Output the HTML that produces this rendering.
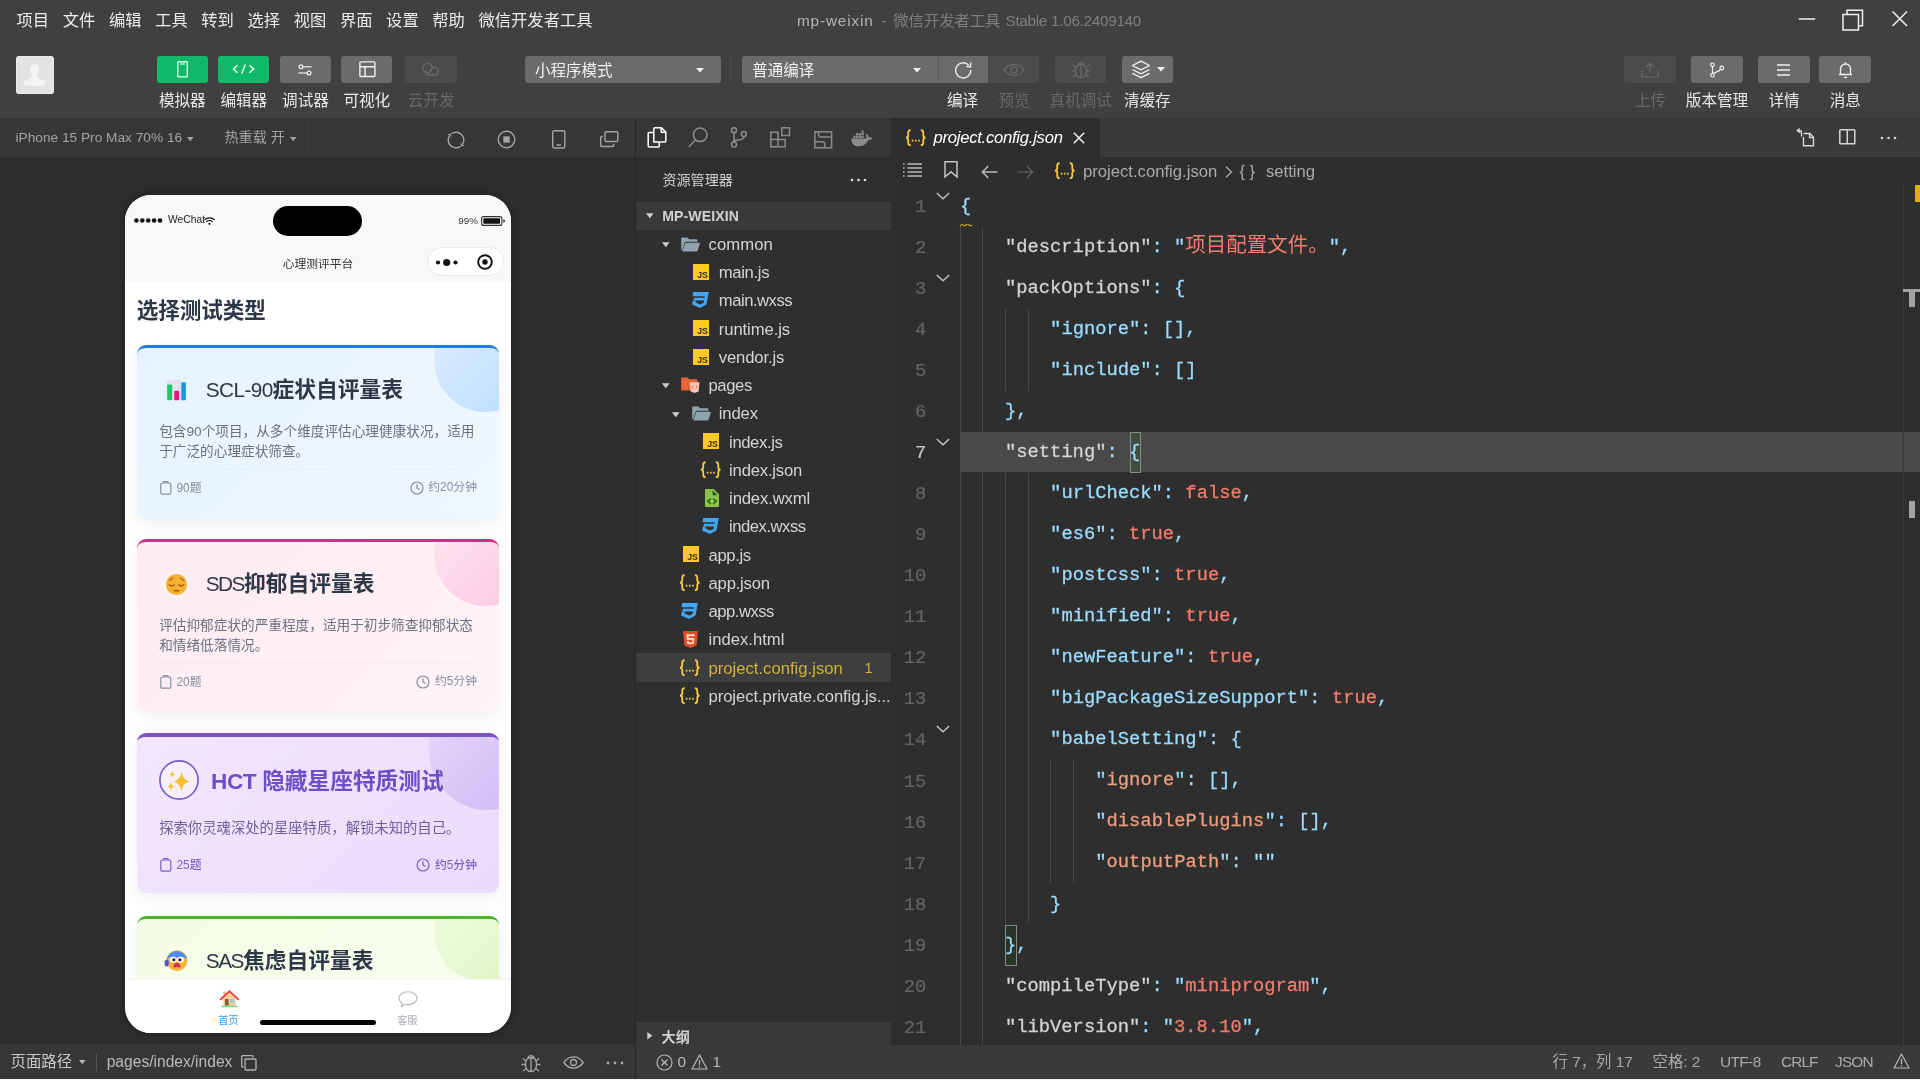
<!DOCTYPE html>
<html lang="zh-CN">
<head>
<meta charset="utf-8">
<title>mp-weixin - 微信开发者工具 Stable 1.06.2409140</title>
<style>
*{box-sizing:border-box;margin:0;padding:0}
html,body{width:1920px;height:1080px;overflow:hidden;background:#404040}
body{position:relative;will-change:transform;font-family:"Liberation Sans","Noto Sans CJK SC",sans-serif;color:#e6e6e6;-webkit-font-smoothing:antialiased}
.abs{position:absolute}
svg{display:block;overflow:visible}
.t{position:absolute;white-space:nowrap;line-height:1}
/* ---------- menubar ---------- */
#menubar{position:absolute;left:0;top:0;width:1920px;height:40px;background:#404040}
#menubar .m{position:absolute;top:12px;font-size:16.3px;line-height:17px;color:#ececec;white-space:nowrap}
#title{position:absolute;top:12px;left:797px;font-size:15.3px;line-height:17px;white-space:nowrap;color:#7e7e7e}
#title b{font-weight:400;color:#b4b4b4}
/* ---------- toolbar ---------- */
#toolbar{position:absolute;left:0;top:40px;width:1920px;height:78px;background:#404040}
.btn{position:absolute;top:16px;height:27px;border-radius:3px;background:#6b6b6b}
.btn.g{background:#10b96a}
.btn.d{background:#4b4b4b}
.lbl{position:absolute;top:52px;font-size:15.6px;line-height:17px;color:#e9e9e9;white-space:nowrap;transform:translateX(-50%)}
.lbl.d{color:#686868}
/* ---------- sim bar ---------- */
#simbar{position:absolute;left:0;top:118px;width:635px;height:39px;background:#363636}
#sim{position:absolute;left:0;top:157px;width:635px;height:888px;background:#2e2e2e;overflow:hidden}
#simfoot{position:absolute;left:0;top:1043.8px;width:635px;height:35.2px;background:#363636}
#vsplit{position:absolute;left:635px;top:118px;width:1px;height:961px;background:#262626}
/* ---------- explorer ---------- */
#actbar{position:absolute;left:636px;top:118px;width:255px;height:39px;background:#363636}
#explorer{position:absolute;left:636px;top:157px;width:255px;height:888px;background:#2f2f2f;overflow:hidden}
/* ---------- editor ---------- */
#tabs{position:absolute;left:891px;top:118px;width:1029px;height:39px;background:#3a3a3a}
#editor{position:absolute;left:891px;top:157px;width:1029px;height:888px;background:#2e2e2e;overflow:hidden}
#status{position:absolute;left:636px;top:1044.6px;width:1284px;height:34.4px;background:#3a3a3a}
#bottomline{position:absolute;left:0;top:1078.6px;width:1920px;height:1.4px;background:#f4f4f4}
.ex{font-size:16.67px;line-height:20px}
.bc{font-size:16.67px;line-height:20px;color:#a9a9a9}
.cl{position:absolute;white-space:pre;font-family:"Liberation Mono","Noto Sans CJK SC",monospace;font-size:18.8px;line-height:41.04px;height:41.04px;color:#9cdcfe;-webkit-text-stroke:.28px}
.cl .k1{color:#d4d4d4}
.cl .k2{color:#9cdcfe}
.cl .k3{color:#ee9d7d}
.cl .s{color:#f47c6c}
.cl .cj{font-size:20.5px;line-height:20px;-webkit-text-stroke:0}
.ln{position:absolute;left:0;width:35.2px;text-align:right;font-family:"Liberation Mono",monospace;font-size:18.8px;line-height:41.04px;color:#646464;margin-top:1.2px;-webkit-text-stroke:.2px}
.ln.cur{color:#c8c8c8}
.ig{position:absolute;width:1px;background:#464646}
.bm{border:1px solid #8a8a8a;background:rgba(0,100,0,.12)}
.sb{top:9.9px;font-size:15.4px;color:#a9a9a9}
#phone{position:absolute;left:125px;top:38px;width:386px;height:837.7px;border-radius:26px;background:#fff;overflow:hidden;box-shadow:0 0 12px rgba(0,0,0,.36)}
.card{position:absolute;left:12px;width:361.8px;border-radius:9px;overflow:hidden;box-shadow:0 6px 18px rgba(40,50,80,.07)}
.card .blob{position:absolute;border-radius:50%}
.c1{background:linear-gradient(135deg,#e6f3fe,#eff8ff)}
.c2{background:linear-gradient(135deg,#fdebf2,#fff4f7)}
.c3{background:linear-gradient(135deg,#f1e7fd,#ebdcfb)}
.c4{background:linear-gradient(135deg,#f4fce6,#f9ffef)}
.c1 .blob{right:-38px;top:-39.500px;width:103px;height:103px;background:linear-gradient(135deg,rgba(190,222,252,.25),rgba(176,214,252,.85))}
.c2 .blob{right:-38px;top:-39.500px;width:103px;height:103px;background:linear-gradient(135deg,rgba(252,214,232,.25),rgba(250,190,218,.85))}
.c3 .blob{right:-46px;top:-47px;width:116px;height:120px;background:linear-gradient(135deg,rgba(220,200,248,.25),rgba(200,176,240,.85))}
.c4 .blob{right:-38px;top:-39.500px;width:103px;height:103px;background:linear-gradient(135deg,rgba(225,246,200,.25),rgba(210,240,180,.7))}
.ttl{font-weight:700}
.ttl i{font-style:normal;font-weight:400;letter-spacing:-.9px;font-size:20.8px}
.ttl b{letter-spacing:-.45px}
.desc{line-height:20px;white-space:nowrap}
</style>
</head>
<body>
<div id="menubar">
<span class="m" style="left:16.5px">项目</span>
<span class="m" style="left:62.7px">文件</span>
<span class="m" style="left:108.9px">编辑</span>
<span class="m" style="left:155.1px">工具</span>
<span class="m" style="left:201.3px">转到</span>
<span class="m" style="left:247.5px">选择</span>
<span class="m" style="left:293.7px">视图</span>
<span class="m" style="left:339.9px">界面</span>
<span class="m" style="left:386.1px">设置</span>
<span class="m" style="left:432.3px">帮助</span>
<span class="m" style="left:478.5px">微信开发者工具</span>
<div id="title"><b style="letter-spacing:.85px">mp-weixin</b><span style="position:absolute;left:84.5px;top:0">-</span><span style="position:absolute;left:96.3px;top:0">微信开发者工具</span><span style="position:absolute;left:208.5px;top:0;letter-spacing:-.3px">Stable 1.06.2409140</span></div>
<svg class="abs" style="left:1798px;top:8px" width="112" height="24" viewBox="0 0 112 24"><g fill="none" stroke="#f0f0f0" stroke-width="1.5"><path d="M.8 11h16.4"/><path d="M45 6.500h15.500v15.500h-15.500zM49 6.500V2.200h15.500v15.500h-4"/><path d="M94.5 3.500l14.5 14.500M109 3.500L94.5 18"/></g></svg>
</div>
<div id="toolbar">
<div class="abs" style="left:16px;top:15.700px;width:38.200px;height:38.500px;border-radius:3.500px;background:#e3e3e3;overflow:hidden;box-shadow:inset 0 0 0 1px #ebebeb">
<svg width="38" height="38" viewBox="0 0 38 38"><ellipse cx="18.400" cy="13.700" rx="4.500" ry="5.100" fill="#f3f3f3"/><path d="M16 17h4.800c0 3 1.200 4.800 3.200 5.700l4 1.700c.8.400 1 1 1 1.800v3.500H8v-3.500c0-.8.200-1.400 1-1.800l4-1.700c2-.9 3-2.700 3-5.700z" fill="#f3f3f3"/></svg>
</div>
<!-- left group -->
<div class="btn g" style="left:157px;width:51px"><svg class="abs" style="left:20px;top:5.3px" width="11" height="17" viewBox="0 0 11 17"><rect x=".7" y=".7" width="9.6" height="15.2" rx=".8" fill="none" stroke="#d9ffe9" stroke-width="1.4"/><path d="M3 3h5" stroke="#d9ffe9" stroke-width="1.2"/></svg></div>
<div class="btn g" style="left:218.3px;width:51px"><svg class="abs" style="left:14px;top:7px" width="23" height="12" viewBox="0 0 23 12"><path d="M5.5 2.2L1.5 6l4 3.8M17.5 2.2l4 3.8-4 3.8M13.3 1.5L9.7 10.5" fill="none" stroke="#e6fff1" stroke-width="1.5"/></svg></div>
<div class="btn" style="left:280px;width:51px"><svg class="abs" style="left:18px;top:7.5px" width="14" height="12" viewBox="0 0 14 12"><g fill="none" stroke="#f0f0f0" stroke-width="1.2"><circle cx="3" cy="2.8" r="1.9"/><path d="M5 2.8h8.5"/><circle cx="11" cy="9" r="1.9"/><path d="M.5 9h8.5"/></g></svg></div>
<div class="btn" style="left:341.3px;width:51px"><svg class="abs" style="left:17.5px;top:5px" width="17" height="17" viewBox="0 0 17 17"><g fill="none" stroke="#f0f0f0" stroke-width="1.4"><rect x=".9" y=".9" width="15" height="14.6" rx=".8"/><path d="M.9 5.7h15M6 5.7v9.8"/></g></svg></div>
<div class="btn d" style="left:405.3px;width:51.7px"><svg class="abs" style="left:16px;top:6px" width="20" height="15" viewBox="0 0 20 15"><g fill="none" stroke="#6a6a6a" stroke-width="1.3"><circle cx="6.5" cy="6" r="4.6"/><path d="M9.5 9.5a4 4 0 1 1 3.5 3.5h-5a3.5 3.5 0 0 1-3-5"/></g></svg></div>
<span class="lbl" style="left:182.3px">模拟器</span>
<span class="lbl" style="left:243.8px">编辑器</span>
<span class="lbl" style="left:305.5px">调试器</span>
<span class="lbl" style="left:366.8px">可视化</span>
<span class="lbl d" style="left:431.2px">云开发</span>
<!-- selects -->
<div class="btn" style="left:525px;width:195.5px"><span class="t" style="left:10px;top:7.3px;font-size:15.5px;color:#f2f2f2">小程序模式</span><svg class="abs" style="left:171px;top:11.5px" width="8" height="5" viewBox="0 0 8 5"><path d="M0 0h8L4 4.6z" fill="#f2f2f2"/></svg></div>
<div class="abs" style="left:730px;top:16px;width:1px;height:27px;background:#4e4e4e"></div>
<div class="btn" style="left:741.7px;width:196px;border-radius:3px 0 0 3px"><span class="t" style="left:10.5px;top:7.3px;font-size:15.5px;color:#f2f2f2">普通编译</span><svg class="abs" style="left:171.3px;top:11.5px" width="8" height="5" viewBox="0 0 8 5"><path d="M0 0h8L4 4.6z" fill="#f2f2f2"/></svg></div>
<div class="btn" style="left:937.7px;width:50.5px;border-radius:0;border-left:1px solid #5c5c5c"><svg class="abs" style="left:14px;top:3.5px" width="21" height="20" viewBox="0 0 21 20"><path d="M15.8 5.2A7.6 7.6 0 1 0 17.8 10" fill="none" stroke="#f2f2f2" stroke-width="1.3"/><path d="M13.2 6.3l4.3.6.3-4.3" fill="none" stroke="#f2f2f2" stroke-width="1.3"/></svg></div>
<div class="btn d" style="left:988.2px;width:50.6px;border-radius:0 3px 3px 0"><svg class="abs" style="left:15px;top:7.5px" width="22" height="12" viewBox="0 0 22 12"><g fill="none" stroke="#6c6c6c" stroke-width="1.2"><path d="M.8 6C4 1.7 7.5.7 11 .7s7 1 10.2 5.3C18 10.3 14.5 11.3 11 11.3S4 10.3.8 6z"/><circle cx="11" cy="6" r="3"/></g></svg></div>
<div class="btn d" style="left:1055px;width:50.8px"><svg class="abs" style="left:14.5px;top:3.5px" width="22" height="20" viewBox="0 0 22 20"><g fill="none" stroke="#6c6c6c" stroke-width="1.2"><path d="M11 4.5c3.6 0 5.5 2.6 5.5 6.5s-2.2 6.5-5.5 6.5S5.5 14.9 5.5 11 7.4 4.5 11 4.5zM11 4.5v13M7.8 5.3a3.3 3.3 0 0 1 6.4 0M5.5 11H1.5M16.5 11h4M6 7.5L2.8 5M16 7.5L19.2 5M6.2 14.5L3 17M15.8 14.5L19 17"/></g></svg></div>
<div class="btn" style="left:1121.7px;width:51.3px"><svg class="abs" style="left:9.5px;top:4px" width="20" height="19" viewBox="0 0 20 19"><g fill="none" stroke="#f2f2f2" stroke-width="1.3" stroke-linejoin="round"><path d="M10 1.2l8.5 4.3L10 9.8 1.5 5.5z"/><path d="M1.5 9.5L10 13.8l8.5-4.3M1.5 13.3l8.5 4.3 8.5-4.3"/></g></svg><svg class="abs" style="left:35.5px;top:11px" width="8" height="5" viewBox="0 0 8 5"><path d="M0 0h8L4 4.6z" fill="#f2f2f2"/></svg></div>
<span class="lbl" style="left:962.6px">编译</span>
<span class="lbl d" style="left:1014.2px">预览</span>
<span class="lbl d" style="left:1080.6px">真机调试</span>
<span class="lbl" style="left:1147.3px">清缓存</span>
<!-- right group -->
<div class="btn d" style="left:1624.3px;width:51.7px"><svg class="abs" style="left:17px;top:5.5px" width="18" height="16" viewBox="0 0 18 16"><g fill="none" stroke="#6a6a6a" stroke-width="1.2"><path d="M1 8.5v6.5h16v-6.5M9 11V1.5M5.2 5L9 1.3 12.8 5"/></g></svg></div>
<div class="btn" style="left:1691px;width:52px"><svg class="abs" style="left:18px;top:5.5px" width="16" height="16" viewBox="0 0 16 16"><g fill="none" stroke="#f2f2f2" stroke-width="1.2"><circle cx="3.5" cy="2.8" r="1.8"/><circle cx="3.5" cy="13.2" r="1.8"/><circle cx="12.8" cy="6" r="1.8"/><path d="M3.5 4.6v6.8M11.5 7.3c-2 3-6 2.5-7.6 4.7"/></g></svg></div>
<div class="btn" style="left:1757.8px;width:52px"><svg class="abs" style="left:19.5px;top:8px" width="13" height="12" viewBox="0 0 13 12"><path d="M0 1h13M0 6h13M0 11h13" stroke="#f2f2f2" stroke-width="1.3"/></svg></div>
<div class="btn" style="left:1819.3px;width:51.7px"><svg class="abs" style="left:18.5px;top:4.5px" width="15" height="18" viewBox="0 0 15 18"><g fill="none" stroke="#f2f2f2" stroke-width="1.3"><path d="M1 13.5h13M2.5 13.5V8a5 5 0 0 1 10 0v5.5M7.5 3V1.2M6 16.3h3"/></g></svg></div>
<span class="lbl d" style="left:1650.5px">上传</span>
<span class="lbl" style="left:1717px">版本管理</span>
<span class="lbl" style="left:1784px">详情</span>
<span class="lbl" style="left:1845.3px">消息</span>
</div>
<div id="simbar">
<span class="t" style="left:15.5px;top:12.5px;font-size:13.7px;color:#a3a3a3">iPhone 15 Pro Max 70% 16</span>
<svg class="abs" style="left:186.5px;top:18.7px" width="7" height="5" viewBox="0 0 7 5"><path d="M0 0h6.600L3.3 4.300z" fill="#a3a3a3"/></svg>
<div class="abs" style="left:210px;top:0;width:1px;height:39px;background:#3b3b3b"></div>
<span class="t" style="left:224.5px;top:12.2px;font-size:14.1px;color:#a3a3a3">热重载 开</span>
<svg class="abs" style="left:289.500px;top:18.700px" width="7" height="5" viewBox="0 0 7 5"><path d="M0 0h6.600L3.3 4.300z" fill="#a3a3a3"/></svg>
<div class="abs" style="left:308px;top:0;width:1px;height:39px;background:#3b3b3b"></div>
<svg class="abs" style="left:445.7px;top:11.5px" width="20" height="20" viewBox="0 0 20 20"><g fill="none" stroke="#a3a3a3" stroke-width="1.4"><path d="M5.53 3.61A7.8 7.8 0 0 1 16.39 14.47M14.47 16.39A7.8 7.8 0 0 1 3.61 5.53"/></g><path d="M15.13 16.6L18.5 15.73 14.59 12.9zM4.87 3.4L1.5 4.27 5.41 7.1z" fill="#a3a3a3"/></svg>
<svg class="abs" style="left:497px;top:11.500px" width="19" height="19" viewBox="0 0 19 19"><circle cx="9.5" cy="9.5" r="8.3" fill="none" stroke="#a3a3a3" stroke-width="1.4"/><rect x="6.3" y="6.3" width="6.4" height="6.4" fill="#a3a3a3"/></svg>
<svg class="abs" style="left:552px;top:11.500px" width="14" height="19" viewBox="0 0 14 19"><rect x=".7" y=".7" width="12.1" height="17.3" rx="1.5" fill="none" stroke="#a3a3a3" stroke-width="1.4"/><path d="M4.5 15h4.5" stroke="#a3a3a3" stroke-width="1.5"/></svg>
<svg class="abs" style="left:600px;top:13px" width="19" height="17" viewBox="0 0 19 17"><g fill="none" stroke="#a3a3a3" stroke-width="1.4"><rect x="5" y=".7" width="12.8" height="9.8" rx="1"/><path d="M2.8 5.500H1.700a1 1 0 0 0-1 1v8a1 1 0 0 0 1 1h11a1 1 0 0 0 1-1v-1.8"/></g></svg>
</div>
<div id="sim">
<div id="phone">
<div class="abs" style="left:0;top:0;width:386px;height:87.300px;background:#f8f8f8"></div>
<svg class="abs" style="left:8.600px;top:23.200px" width="30" height="5" viewBox="0 0 30 5"><g fill="#111"><circle cx="2.4" cy="2.5" r="2.3"/><circle cx="8.3" cy="2.5" r="2.3"/><circle cx="14.2" cy="2.5" r="2.3"/><circle cx="20.1" cy="2.5" r="2.3"/><circle cx="26" cy="2.5" r="2.3"/></g></svg>
<span class="t" style="left:43px;top:20.400px;font-size:10.300px;color:#222">WeChat</span>
<svg class="abs" style="left:79.200px;top:21.700px" width="11" height="8" viewBox="0 0 11 8"><g fill="none" stroke="#111" stroke-width="1.3"><path d="M.5 2.800a7.2 7.2 0 0 1 10 0"/><path d="M2.4 4.800a4.5 4.5 0 0 1 6.2 0"/></g><circle cx="5.5" cy="6.8" r="1.1" fill="#111"/></svg>
<div class="abs" style="left:148.200px;top:11.300px;width:89px;height:30.200px;border-radius:15.100px;background:#000"></div>
<span class="t" style="left:333.300px;top:20.700px;font-size:9.800px;color:#333">99%</span>
<svg class="abs" style="left:355.800px;top:20.500px" width="24" height="10" viewBox="0 0 24 10"><rect x=".6" y=".6" width="20.3" height="8.8" rx="2" fill="none" stroke="#333" stroke-width="1.1"/><rect x="2.3" y="2.3" width="16.8" height="5.4" rx=".8" fill="#111"/><path d="M22.3 3.300v3.400a1.6 1.6 0 0 0 0-3.400z" fill="#333"/></svg>
<span class="t" style="left:157.700px;top:63px;font-size:11.750px;color:#333">心理测评平台</span>
<div class="abs" style="left:302.200px;top:52.400px;width:77px;height:29px;border-radius:14.500px;background:#fff;border:.8px solid #e9e9e9"></div>
<svg class="abs" style="left:311px;top:63.500px" width="22" height="7" viewBox="0 0 22 7"><g fill="#111"><circle cx="2" cy="3.5" r="2.1"/><circle cx="10.7" cy="3.5" r="3.6"/><circle cx="19.5" cy="3.5" r="2.1"/></g></svg>
<svg class="abs" style="left:351.500px;top:59px" width="16" height="16" viewBox="0 0 16 16"><circle cx="8" cy="8" r="6.8" fill="none" stroke="#111" stroke-width="1.9"/><circle cx="8" cy="8" r="2.7" fill="#111"/></svg>
<div class="abs" style="left:0;top:87.300px;width:386px;height:697px;background:#fff"></div>
<span class="t" style="left:11.700px;top:104.500px;font-size:21.600px;font-weight:700;color:#2d3748;letter-spacing:-.1px">选择测试类型</span>
<div class="card c1" style="top:150px;height:173.5px;border-top:3px solid #1f7fd8">
<div class="blob"></div>
<div class="abs" style="left:0;top:-3px;width:100%;height:173.5px">
<svg class="abs" style="left:29px;top:34px" width="22" height="22" viewBox="0 0 22 22"><rect x="1" y=".8" width="14" height="20.2" rx="1" fill="#e3deeb"/><path d="M5.7 .8v20M10.3 .8v20M1 6h14M1 11h14" stroke="#f3f0f7" stroke-width=".8"/><rect x="1.2" y="5.4" width="5" height="15.8" rx=".8" fill="#17c964"/><rect x="8.3" y="11.7" width="4.7" height="9.5" rx=".8" fill="#e0157f"/><rect x="15.3" y="3.2" width="4.5" height="18" rx=".8" fill="#1497dd"/></svg>
<span class="t ttl" style="left:68.8px;top:33.9px;font-size:21.75px;color:#2d3748"><i style="letter-spacing:-.62px">SCL-90</i>症状自评量表</span>
<div class="abs desc" style="left:22.200px;top:77.2px;width:322px;font-size:13.65px;color:#6b7280">包含90个项目，从多个维度评估心理健康状况，适用<br>于广泛的心理症状筛查。</div>
<div class="abs" style="left:22.200px;top:124.300px;width:318px;height:1px;background:rgba(0,0,0,.022)"></div>
<div class="abs" style="left:22.700px;top:135.8px"><svg width="12" height="14" viewBox="0 0 12 14"><g fill="none" stroke="#848fa0" stroke-width="1.2"><rect x=".8" y="2" width="10" height="11.2" rx="1.5"/><path d="M3.5 2V1.300a.6.6 0 0 1 .6-.6h3.400a.6.6 0 0 1 .6.600V2"/></g></svg></div>
<span class="t" style="left:39.500px;top:138.0px;font-size:11.850px;color:#848fa0;">90题</span>
<div class="abs" style="right:21.800px;top:135.3px;height:15px;display:flex;align-items:center;gap:4.500px"><span style="display:block"><svg width="14" height="14" viewBox="0 0 14 14"><g fill="none" stroke="#848fa0" stroke-width="1.2"><circle cx="7" cy="7" r="6"/><path d="M7 3.300V7l2.5 1.5"/></g></svg></span><span style="font-size:11.850px;line-height:15px;color:#848fa0;white-space:nowrap">约20分钟</span></div>
</div></div>
<div class="card c2" style="top:344.2px;height:172.8px;border-top:3px solid #d42b86">
<div class="blob"></div>
<div class="abs" style="left:0;top:-3px;width:100%;height:172.8px">
<svg class="abs" style="left:28.200px;top:33.500px" width="23" height="23" viewBox="0 0 23 23"><circle cx="11.5" cy="11.5" r="13.5" fill="#fff" opacity=".35"/><circle cx="11.5" cy="11.5" r="10.6" fill="#f9b133"/><g fill="none" stroke="#a85d12" stroke-width="1.3" stroke-linecap="round"><path d="M4.3 7.300c1.5-.4 2.6-1.3 3.3-2.600M18.7 7.300c-1.5-.4-2.6-1.3-3.3-2.6"/><path d="M4.3 11.800c1.5 1.3 3.5 1.3 5 0M13.7 11.800c1.5 1.3 3.5 1.3 5 0" stroke-width="1.5"/><path d="M9.3 17.800h4.4" stroke-width="1.5"/></g></svg>
<span class="t ttl" style="left:68.8px;top:33.9px;font-size:21.75px;color:#2d3748"><i style="letter-spacing:-1.550px">SDS</i>抑郁自评量表</span>
<div class="abs desc" style="left:22.200px;top:77.2px;width:322px;font-size:13.65px;color:#6b7280">评估抑郁症状的严重程度，适用于初步筛查抑郁状态<br>和情绪低落情况。</div>
<div class="abs" style="left:22.200px;top:124.300px;width:318px;height:1px;background:rgba(0,0,0,.022)"></div>
<div class="abs" style="left:22.700px;top:135.8px"><svg width="12" height="14" viewBox="0 0 12 14"><g fill="none" stroke="#848fa0" stroke-width="1.2"><rect x=".8" y="2" width="10" height="11.2" rx="1.5"/><path d="M3.5 2V1.300a.6.6 0 0 1 .6-.6h3.400a.6.6 0 0 1 .6.600V2"/></g></svg></div>
<span class="t" style="left:39.500px;top:138.0px;font-size:11.850px;color:#848fa0;">20题</span>
<div class="abs" style="right:21.800px;top:135.3px;height:15px;display:flex;align-items:center;gap:4.500px"><span style="display:block"><svg width="14" height="14" viewBox="0 0 14 14"><g fill="none" stroke="#848fa0" stroke-width="1.2"><circle cx="7" cy="7" r="6"/><path d="M7 3.300V7l2.5 1.5"/></g></svg></span><span style="font-size:11.850px;line-height:15px;color:#848fa0;white-space:nowrap">约5分钟</span></div>
</div></div>
<div class="card c3" style="top:538.3px;height:159.7px;border-top:4.6px solid #7b52c9">
<div class="blob"></div>
<div class="abs" style="left:0;top:-4.6px;width:100%;height:159.7px">
<svg class="abs" style="left:22.200px;top:27.200px" width="40" height="40" viewBox="0 0 40 40"><circle cx="20" cy="20" r="19.1" fill="rgba(255,255,255,.35)" stroke="#7b5fc4" stroke-width="1.7"/><path d="M22.5 11.400c1 5.5 2.8 8.3 8.2 10.2-5.4 1.9-7.2 4.7-8.2 10.2-1-5.5-2.8-8.3-8.2-10.2 5.4-1.9 7.2-4.7 8.2-10.200z" fill="#f7c22f"/><path d="M13.3 11c.4 2 1.1 2.9 3 3.5-1.9.6-2.6 1.5-3 3.5-.4-2-1.1-2.9-3-3.5 1.9-.6 2.6-1.5 3-3.500z" fill="#f7c22f"/><path d="M11.9 22.300c.5 2.4 1.3 3.5 3.5 4.2-2.2.7-3 1.8-3.5 4.2-.5-2.4-1.3-3.5-3.5-4.2 2.2-.7 3-1.8 3.5-4.200z" fill="#f7c22f"/></svg>
<span class="t ttl" style="left:74px;top:37.5px;font-size:22.7px;color:#6c4fc6"><b>HCT </b>隐藏星座特质测试</span>
<div class="abs desc" style="left:22.200px;top:85px;width:322px;font-size:14.35px;color:#6f5f9a">探索你灵魂深处的星座特质，解锁未知的自己。</div>
<div class="abs" style="left:22.700px;top:125.3px"><svg width="12" height="14" viewBox="0 0 12 14"><g fill="none" stroke="#7b5fc4" stroke-width="1.2"><rect x=".8" y="2" width="10" height="11.2" rx="1.5"/><path d="M3.5 2V1.300a.6.6 0 0 1 .6-.6h3.400a.6.6 0 0 1 .6.600V2"/></g></svg></div>
<span class="t" style="left:39.500px;top:127.5px;font-size:11.850px;color:#7b5fc4;font-weight:500;">25题</span>
<div class="abs" style="right:21.800px;top:124.8px;height:15px;display:flex;align-items:center;gap:4.500px"><span style="display:block"><svg width="14" height="14" viewBox="0 0 14 14"><g fill="none" stroke="#7b5fc4" stroke-width="1.2"><circle cx="7" cy="7" r="6"/><path d="M7 3.300V7l2.5 1.5"/></g></svg></span><span style="font-size:11.850px;line-height:15px;color:#7b5fc4;font-weight:500;white-space:nowrap">约5分钟</span></div>
</div></div>
<div class="card c4" style="top:720.8px;height:173px;border-top:3px solid #4fb02c">
<div class="blob"></div>
<div class="abs" style="left:0;top:-3px;width:100%;height:173px">
<svg class="abs" style="left:26.600px;top:33.200px" width="24" height="23" viewBox="0 0 24 23"><circle cx="12.9" cy="11.7" r="10.4" fill="#f9b133"/><path d="M2.7 10.300A10.4 10.4 0 0 1 23.1 10.300c-2.5-2-5-2.2-7.3-.8-1.8-1.5-4-1.5-5.8 0-2.3-1.4-4.8-1.2-7.3.8z" fill="#4f8df5"/><ellipse cx="9.3" cy="10.7" rx="3.5" ry="2.9" fill="#fff"/><ellipse cx="16.5" cy="10.7" rx="3.5" ry="2.9" fill="#fff"/><circle cx="9.9" cy="10.8" r="1.5" fill="#1d1210"/><circle cx="15.9" cy="10.8" r="1.5" fill="#1d1210"/><path d="M9.3 18.600c0-3 1.3-4.5 3.6-4.500s3.6 1.5 3.6 4.500c-2.3-.9-4.9-.9-7.2 0z" fill="#d6265f"/><ellipse cx="2.7" cy="14" rx="2.1" ry="3.5" fill="#4a56c9"/></svg>
<span class="t ttl" style="left:68.8px;top:33.9px;font-size:21.75px;color:#2d3748"><i style="letter-spacing:-1.500px">SAS</i>焦虑自评量表</span>

<div class="abs" style="left:22.200px;top:124.300px;width:318px;height:1px;background:rgba(0,0,0,.022)"></div>
<div class="abs" style="left:22.700px;top:135.8px"><svg width="12" height="14" viewBox="0 0 12 14"><g fill="none" stroke="#848fa0" stroke-width="1.2"><rect x=".8" y="2" width="10" height="11.2" rx="1.5"/><path d="M3.5 2V1.300a.6.6 0 0 1 .6-.6h3.400a.6.6 0 0 1 .6.600V2"/></g></svg></div>
<span class="t" style="left:39.500px;top:138.0px;font-size:11.850px;color:#848fa0;"></span>
<div class="abs" style="right:21.800px;top:135.3px;height:15px;display:flex;align-items:center;gap:4.500px"><span style="display:block"><svg width="14" height="14" viewBox="0 0 14 14"><g fill="none" stroke="#848fa0" stroke-width="1.2"><circle cx="7" cy="7" r="6"/><path d="M7 3.300V7l2.5 1.5"/></g></svg></span><span style="font-size:11.850px;line-height:15px;color:#848fa0;white-space:nowrap"></span></div>
</div></div>
<div class="abs" style="left:0;top:784.300px;width:386px;height:54px;background:#fff;border-top:.8px solid #f4f4f4"></div>
<svg class="abs" style="left:94.500px;top:794.500px" width="19" height="18" viewBox="0 0 19 18"><rect x="3.5" y="1.5" width="2" height="3.5" fill="#e8a68c"/><path d="M3.3 8.300L9.5 2.500l6.2 5.800v7.300H3.300z" fill="#f6cf94"/><path d="M.8 9.300L9.5 1.200l8.7 8.1" fill="none" stroke="#e2483d" stroke-width="1.9" stroke-linejoin="round" stroke-linecap="round"/><rect x="5" y="9" width="3.6" height="6.6" fill="#8b5a2b"/><rect x="10.3" y="9" width="3.7" height="3.8" fill="#9cc7ee"/><rect x="1.3" y="15.5" width="16.4" height="1.8" rx=".9" fill="#7fd08a"/></svg>
<span class="t" style="left:93.200px;top:820.600px;font-size:10.200px;color:#3b9cf0">首页</span>
<svg class="abs" style="left:272.500px;top:795.500px" width="20" height="17" viewBox="0 0 20 17"><path d="M10 .8c5 0 9 2.9 9 6.400s-4 6.4-9 6.400c-1 0-2-.1-2.9-.4L3.5 15.500l.6-3.500C2.2 10.8 1 9.1 1 7.2 1 3.7 5 .8 10 .8z" fill="none" stroke="#b4b8c0" stroke-width="1.1"/></svg>
<span class="t" style="left:272.200px;top:820.600px;font-size:10.200px;color:#a8acb4">客服</span>
<div class="abs" style="left:135px;top:824.800px;width:115.700px;height:5.300px;border-radius:3px;background:#050505"></div>
</div>
</div>
<div id="simfoot">
<span class="t" style="left:10.500px;top:10.7px;font-size:15.400px;color:#c9c9c9">页面路径</span>
<svg class="abs" style="left:78.500px;top:16.7px" width="7" height="5" viewBox="0 0 7 5"><path d="M0 0h6.600L3.3 4.300z" fill="#b4b4b4"/></svg>
<div class="abs" style="left:96px;top:10.2px;width:1px;height:17px;background:#555"></div>
<span class="t" style="left:106.700px;top:10.2px;font-size:15.600px;color:#b9b9b9">pages/index/index</span>
<svg class="abs" style="left:241px;top:11.2px" width="16" height="16" viewBox="0 0 16 16"><g fill="none" stroke="#b4b4b4" stroke-width="1.3"><rect x="4" y="4" width="11" height="11" rx="1"/><path d="M2.5 12H1.700a1 1 0 0 1-1-1V1.700a1 1 0 0 1 1-1H11a1 1 0 0 1 1 1v.8"/></g></svg>
<svg class="abs" style="left:520px;top:8.2px" width="22" height="22" viewBox="0 0 22 22"><g fill="none" stroke="#a8a8a8" stroke-width="1.3"><path d="M11 5.500c3.6 0 5.5 2.8 5.5 7s-2.2 7-5.5 7-5.5-2.8-5.5-7 1.9-7 5.5-7zM11 5.500v14M7.8 6.200a3.3 3.3 0 0 1 6.4 0M5.5 12.500H1.500M16.5 12.500h4M6 9L2.8 6.500M16 9l3.2-2.500M6.2 16.500L3 19M15.8 16.500l3.2 2.5"/></g></svg>
<svg class="abs" style="left:562.500px;top:12.2px" width="21" height="13" viewBox="0 0 21 13"><g fill="none" stroke="#a8a8a8" stroke-width="1.3"><path d="M.8 6.500C4 2 7.3.8 10.5.8s6.5 1.2 9.7 5.700C17 11 13.7 12.2 10.5 12.200S4 11 .8 6.500z"/><circle cx="10.5" cy="6.5" r="3"/></g></svg>
<svg class="abs" style="left:606px;top:17.2px" width="18" height="4" viewBox="0 0 18 4"><circle cx="2" cy="2" r="1.4" fill="#a8a8a8"/><circle cx="9" cy="2" r="1.4" fill="#a8a8a8"/><circle cx="16" cy="2" r="1.4" fill="#a8a8a8"/></svg>
</div>
<div id="actbar">
<svg class="abs" style="left:11px;top:9px" width="20" height="21" viewBox="0 0 20 21"><g fill="none" stroke="#ffffff" stroke-width="1.5" stroke-linejoin="round"><path d="M6.8 15V1.800a1 1 0 0 1 1-1h6.700l4.3 4.300V14a1 1 0 0 1-1 1z"/><path d="M14.2 1v4.300h4.4"/><path d="M6.5 5.500H2.200a1 1 0 0 0-1 1V19a1 1 0 0 0 1 1h9a1 1 0 0 0 1-1v-3.6"/></g></svg>
<svg class="abs" style="left:52px;top:9px" width="21" height="21" viewBox="0 0 21 21"><g fill="none" stroke="#8c8c8c" stroke-width="1.5"><circle cx="12.2" cy="7.8" r="6.8"/><path d="M7.5 12.700L.8 20"/></g></svg>
<svg class="abs" style="left:94px;top:9px" width="18" height="21" viewBox="0 0 18 21"><g fill="none" stroke="#8c8c8c" stroke-width="1.5"><circle cx="4" cy="3.3" r="2.5"/><circle cx="4" cy="17.5" r="2.5"/><circle cx="13.8" cy="7" r="2.5"/><path d="M4 5.800V15M13.8 9.500c0 3-3 3.3-6 3.500s-3.8 1-3.8 2"/></g></svg>
<svg class="abs" style="left:133.5px;top:9px" width="21" height="21" viewBox="0 0 21 21"><g fill="none" stroke="#8c8c8c" stroke-width="1.5"><path d="M.8 5.3h7.200v7.200h7.200v7.300H.8zM8 12.500v7.300M.8 12.500h7.200"/><rect x="11.8" y=".8" width="7.700" height="7.700"/></g></svg>
<svg class="abs" style="left:177.500px;top:12.500px" width="19" height="18" viewBox="0 0 19 18"><g fill="none" stroke="#8c8c8c" stroke-width="1.5"><rect x=".8" y=".8" width="16.8" height="16"/><path d="M.8 10.800h7.500a2.5 2.5 0 0 1 2.5 2.500v3.500M4.5.8v2.700a2.5 2.5 0 0 0 2.5 2.500h10.6"/></g></svg>
<svg class="abs" style="left:215px;top:11.500px" width="22" height="17" viewBox="0 0 22 17"><path d="M.3 8.500h14.900c.5-1.8.2-3 -.6-4 .8-.7 1.7-.3 2.3.5 .6 1 .8 1.7 .8 2.4 1.2-.4 2.6-.2 3.8.5-.8 1.5-2.3 2-4 1.800C15.5 14 12 16.3 7.3 16.3 2.8 16.3.5 13.5.3 8.500z" fill="#8c8c8c"/><g fill="#8c8c8c"><rect x="2.3" y="5.7" width="2.3" height="2.2"/><rect x="5" y="5.7" width="2.3" height="2.2"/><rect x="7.7" y="5.7" width="2.3" height="2.2"/><rect x="10.4" y="5.7" width="2.3" height="2.2"/><rect x="5" y="3.1" width="2.3" height="2.2"/><rect x="7.7" y="3.1" width="2.3" height="2.2"/><rect x="10.4" y="3.1" width="2.3" height="2.2"/><rect x="10.4" y=".5" width="2.3" height="2.2"/></g></svg>
</div>
<div id="explorer">
<span class="t" style="left:26.400px;top:15.500px;font-size:14.100px;color:#cfcfcf">资源管理器</span>
<svg class="abs" style="left:214px;top:21px" width="17" height="4" viewBox="0 0 17 4"><circle cx="2" cy="2" r="1.3" fill="#e0e0e0"/><circle cx="8.5" cy="2" r="1.3" fill="#e0e0e0"/><circle cx="15" cy="2" r="1.3" fill="#e0e0e0"/></svg>
<div class="abs" style="left:0;top:44.700px;width:255px;height:28.200px;background:#393939"></div>
<div class="abs" style="left:10.300px;top:56.300px"><svg width="8" height="6" viewBox="0 0 8 6"><path d="M0 .3h7.600L3.8 5.300z" fill="#cfcfcf"/></svg></div>
<span class="t" style="left:26.200px;top:52px;font-size:14.100px;font-weight:700;color:#d2d2d2;letter-spacing:.1px">MP-WEIXIN</span>
<div class="abs" style="left:25.8px;top:85.0px"><svg width="8" height="6" viewBox="0 0 8 6"><path d="M0 .3h7.600L3.8 5.300z" fill="#cfcfcf"/></svg></div>
<div class="abs" style="left:45.2px;top:79.5px"><svg width="19" height="15" viewBox="0 0 19 15"><path d="M1.2 0.500h5.300l1.7 1.800h7.300a1 1 0 0 1 1 1v1.400H4.800a1.2 1.2 0 0 0-1.150.85L1.1 13.500a1 1 0 0 1-.9-1V1.500a1 1 0 0 1 1-1z" fill="#90a4ae"/><path d="M4.9 5.700h13.300a.7.7 0 0 1 .67.900l-2.3 7.200a1 1 0 0 1-.95.700H2.100a.6.6 0 0 1-.57-.8l2.4-7.300a1 1 0 0 1 .97-.7z" fill="#90a4ae"/></svg></div>
<span class="t ex" style="left:72.5px;top:77.9px;color:#d4d4d4;letter-spacing:0.1px">common</span>
<div class="abs" style="left:57.0px;top:107.0px"><svg width="16" height="16" viewBox="0 0 16 16"><rect width="16" height="16" fill="#ffca28"/><text x="4.2" y="14.2" font-family="Liberation Sans,sans-serif" font-weight="700" font-size="8.5" fill="#3a2e05" textLength="10.8" lengthAdjust="spacingAndGlyphs">JS</text></svg></div>
<span class="t ex" style="left:82.8px;top:106.2px;color:#d4d4d4;letter-spacing:-0.35px">main.js</span>
<div class="abs" style="left:54.5px;top:135.3px"><svg width="18" height="16" viewBox="0 0 18 16"><path d="M2.2 0h15.600l-2.3 12.500L9 16l-7.9-3.6.7-3.700h2.900l-.25 1.500L9 12.500l3.6-1.5.45-2.500H2.400l.55-2.800h10.600l.3-1.500H1.600z" fill="#42a5f5"/></svg></div>
<span class="t ex" style="left:82.8px;top:134.4px;color:#d4d4d4;letter-spacing:-0.5px">main.wxss</span>
<div class="abs" style="left:57.0px;top:163.4px"><svg width="16" height="16" viewBox="0 0 16 16"><rect width="16" height="16" fill="#ffca28"/><text x="4.2" y="14.2" font-family="Liberation Sans,sans-serif" font-weight="700" font-size="8.5" fill="#3a2e05" textLength="10.8" lengthAdjust="spacingAndGlyphs">JS</text></svg></div>
<span class="t ex" style="left:82.8px;top:162.7px;color:#d4d4d4;letter-spacing:-0.1px">runtime.js</span>
<div class="abs" style="left:57.0px;top:191.7px"><svg width="16" height="16" viewBox="0 0 16 16"><rect width="16" height="16" fill="#ffca28"/><text x="4.2" y="14.2" font-family="Liberation Sans,sans-serif" font-weight="700" font-size="8.5" fill="#3a2e05" textLength="10.8" lengthAdjust="spacingAndGlyphs">JS</text></svg></div>
<span class="t ex" style="left:82.8px;top:190.9px;color:#d4d4d4;letter-spacing:-0.15px">vendor.js</span>
<div class="abs" style="left:25.8px;top:226.2px"><svg width="8" height="6" viewBox="0 0 8 6"><path d="M0 .3h7.600L3.8 5.300z" fill="#cfcfcf"/></svg></div>
<div class="abs" style="left:45.0px;top:220.2px"><svg width="19" height="17" viewBox="0 0 19 17"><path d="M1.2 0.500h5.300l1.7 1.800h7.300a1 1 0 0 1 1 1v9.200a1 1 0 0 1-1 1H1.200a1 1 0 0 1-1-1V1.500a1 1 0 0 1 1-1z" fill="#e8623a"/><path d="M8.6 5.200h9.900l-.9 9.3-4 1.5-4-1.500z" fill="#ffc9b9"/><path d="M12.3 8.300l-1.6 1.7 1.6 1.700M14.8 8.300l1.6 1.7-1.6 1.7" fill="none" stroke="#e8623a" stroke-width="1"/></svg></div>
<span class="t ex" style="left:72.5px;top:219.2px;color:#d4d4d4;letter-spacing:-0.4px">pages</span>
<div class="abs" style="left:36.1px;top:254.5px"><svg width="8" height="6" viewBox="0 0 8 6"><path d="M0 .3h7.600L3.8 5.300z" fill="#cfcfcf"/></svg></div>
<div class="abs" style="left:55.5px;top:249.0px"><svg width="19" height="15" viewBox="0 0 19 15"><path d="M1.2 0.500h5.300l1.7 1.800h7.300a1 1 0 0 1 1 1v1.400H4.800a1.2 1.2 0 0 0-1.150.85L1.1 13.500a1 1 0 0 1-.9-1V1.500a1 1 0 0 1 1-1z" fill="#90a4ae"/><path d="M4.9 5.700h13.300a.7.7 0 0 1 .67.900l-2.3 7.200a1 1 0 0 1-.95.700H2.100a.6.6 0 0 1-.57-.8l2.4-7.300a1 1 0 0 1 .97-.7z" fill="#90a4ae"/></svg></div>
<span class="t ex" style="left:82.8px;top:247.4px;color:#d4d4d4;letter-spacing:-0.15px">index</span>
<div class="abs" style="left:67.3px;top:276.4px"><svg width="16" height="16" viewBox="0 0 16 16"><rect width="16" height="16" fill="#ffca28"/><text x="4.2" y="14.2" font-family="Liberation Sans,sans-serif" font-weight="700" font-size="8.5" fill="#3a2e05" textLength="10.8" lengthAdjust="spacingAndGlyphs">JS</text></svg></div>
<span class="t ex" style="left:93.1px;top:275.6px;color:#d4d4d4;letter-spacing:-0.4px">index.js</span>
<div class="abs" style="left:63.9px;top:304.2px"><svg width="21.5" height="17.2" viewBox="0 0 20 16"><g fill="none" stroke="#f7c948" stroke-width="1.7"><path d="M5.3 1C3.3 1 3 1.8 3 3.300v2.200c0 1.5-.6 2.3-2 2.5 1.4.2 2 1 2 2.500v2.200c0 1.5.3 2.3 2.3 2.3"/><path d="M14.7 1c2 0 2.3.8 2.3 2.300v2.200c0 1.5.6 2.3 2 2.5-1.4.2-2 1-2 2.500v2.200c0 1.5-.3 2.3-2.3 2.3"/></g><g fill="#f7c948"><rect x="6.3" y="10" width="1.5" height="1.7"/><rect x="9.250" y="10" width="1.5" height="1.7"/><rect x="12.2" y="10" width="1.5" height="1.7"/></g></svg></div>
<span class="t ex" style="left:93.1px;top:303.9px;color:#d4d4d4;letter-spacing:-0.2px">index.json</span>
<div class="abs" style="left:68.6px;top:331.8px"><svg width="14" height="18" viewBox="0 0 14 18"><path d="M1.3 0h7.400L14 5.300v11.400a1.3 1.3 0 0 1-1.3 1.300H1.300A1.3 1.3 0 0 1 0 16.700V1.300A1.3 1.3 0 0 1 1.3 0z" fill="#8bc34a"/><path d="M7.7 1.500v4.700h4.700z" fill="#1e5a1a"/><path d="M5.6 9.800L3 12.300l2.6 2.500M8.4 9.800l2.6 2.5-2.6 2.5" fill="none" stroke="#1e5a1a" stroke-width="1.5"/></svg></div>
<span class="t ex" style="left:93.1px;top:332.1px;color:#d4d4d4;letter-spacing:-0.15px">index.wxml</span>
<div class="abs" style="left:64.8px;top:361.3px"><svg width="18" height="16" viewBox="0 0 18 16"><path d="M2.2 0h15.600l-2.3 12.500L9 16l-7.9-3.6.7-3.700h2.900l-.25 1.500L9 12.500l3.6-1.5.45-2.500H2.400l.55-2.800h10.600l.3-1.500H1.600z" fill="#42a5f5"/></svg></div>
<span class="t ex" style="left:93.1px;top:360.4px;color:#d4d4d4;letter-spacing:-0.5px">index.wxss</span>
<div class="abs" style="left:46.7px;top:389.4px"><svg width="16" height="16" viewBox="0 0 16 16"><rect width="16" height="16" fill="#ffca28"/><text x="4.2" y="14.2" font-family="Liberation Sans,sans-serif" font-weight="700" font-size="8.5" fill="#3a2e05" textLength="10.8" lengthAdjust="spacingAndGlyphs">JS</text></svg></div>
<span class="t ex" style="left:72.5px;top:388.6px;color:#d4d4d4;letter-spacing:-0.37px">app.js</span>
<div class="abs" style="left:43.3px;top:417.2px"><svg width="21.5" height="17.2" viewBox="0 0 20 16"><g fill="none" stroke="#f7c948" stroke-width="1.7"><path d="M5.3 1C3.3 1 3 1.8 3 3.300v2.200c0 1.5-.6 2.3-2 2.5 1.4.2 2 1 2 2.500v2.200c0 1.5.3 2.3 2.3 2.3"/><path d="M14.7 1c2 0 2.3.8 2.3 2.300v2.200c0 1.5.6 2.3 2 2.5-1.4.2-2 1-2 2.500v2.200c0 1.5-.3 2.3-2.3 2.3"/></g><g fill="#f7c948"><rect x="6.3" y="10" width="1.5" height="1.7"/><rect x="9.250" y="10" width="1.5" height="1.7"/><rect x="12.2" y="10" width="1.5" height="1.7"/></g></svg></div>
<span class="t ex" style="left:72.5px;top:416.9px;color:#d4d4d4;letter-spacing:-0.2px">app.json</span>
<div class="abs" style="left:44.2px;top:446.1px"><svg width="18" height="16" viewBox="0 0 18 16"><path d="M2.2 0h15.600l-2.3 12.500L9 16l-7.9-3.6.7-3.700h2.900l-.25 1.500L9 12.500l3.6-1.5.45-2.500H2.400l.55-2.800h10.600l.3-1.500H1.600z" fill="#42a5f5"/></svg></div>
<span class="t ex" style="left:72.5px;top:445.1px;color:#d4d4d4;letter-spacing:-0.5px">app.wxss</span>
<div class="abs" style="left:47.0px;top:473.7px"><svg width="15" height="17" viewBox="0 0 15 17"><path d="M0 0h15l-1.4 14.500L7.5 17l-6.1-2.500z" fill="#e44d26"/><path d="M3.3 3.200h8.500l-.2 2H5.500l.15 1.900h5.800l-.5 5.3-3.450 1.2-3.450-1.2-.2-2.400h2l.1 1 1.550.5 1.550-.5.2-2H3.800z" fill="#fbd3c8"/></svg></div>
<span class="t ex" style="left:72.5px;top:473.4px;color:#d4d4d4">index.html</span>
<div class="abs" style="left:0;top:496.4px;width:255px;height:28.400px;background:#3e3e3e"></div>
<div class="abs" style="left:43.3px;top:501.9px"><svg width="21.5" height="17.2" viewBox="0 0 20 16"><g fill="none" stroke="#f7c948" stroke-width="1.7"><path d="M5.3 1C3.3 1 3 1.8 3 3.300v2.200c0 1.5-.6 2.3-2 2.5 1.4.2 2 1 2 2.500v2.200c0 1.5.3 2.3 2.3 2.3"/><path d="M14.7 1c2 0 2.3.8 2.3 2.300v2.200c0 1.5.6 2.3 2 2.5-1.4.2-2 1-2 2.500v2.200c0 1.5-.3 2.3-2.3 2.3"/></g><g fill="#f7c948"><rect x="6.3" y="10" width="1.5" height="1.7"/><rect x="9.250" y="10" width="1.5" height="1.7"/><rect x="12.2" y="10" width="1.5" height="1.7"/></g></svg></div>
<span class="t ex" style="left:72.5px;top:501.6px;color:#d3b13a">project.config.json</span>
<span class="t" style="left:228.500px;top:503.6px;font-size:14.500px;color:#d3b13a">1</span>
<div class="abs" style="left:43.3px;top:530.2px"><svg width="21.5" height="17.2" viewBox="0 0 20 16"><g fill="none" stroke="#f7c948" stroke-width="1.7"><path d="M5.3 1C3.3 1 3 1.8 3 3.300v2.200c0 1.5-.6 2.3-2 2.5 1.4.2 2 1 2 2.500v2.200c0 1.5.3 2.3 2.3 2.3"/><path d="M14.7 1c2 0 2.3.8 2.3 2.300v2.200c0 1.5.6 2.3 2 2.5-1.4.2-2 1-2 2.500v2.200c0 1.5-.3 2.3-2.3 2.3"/></g><g fill="#f7c948"><rect x="6.3" y="10" width="1.5" height="1.7"/><rect x="9.250" y="10" width="1.5" height="1.7"/><rect x="12.2" y="10" width="1.5" height="1.7"/></g></svg></div>
<span class="t ex" style="left:72.5px;top:529.9px;color:#d4d4d4;letter-spacing:-0.08px">project.private.config.js...</span>
<div class="abs" style="left:0;top:865.400px;width:255px;height:23px;background:#393939"></div>
<svg class="abs" style="left:11px;top:875px" width="6" height="8" viewBox="0 0 6 8"><path d="M.3 0v7.600L5.3 3.800z" fill="#cfcfcf"/></svg>
<span class="t" style="left:25.600px;top:872.500px;font-size:14.100px;font-weight:700;color:#d2d2d2">大纲</span>
</div>
<div id="tabs">
<div class="abs" style="left:0;top:0;width:209px;height:39px;background:#2e2e2e"></div>
<svg class="abs" style="left:14.300px;top:11.200px" width="21.500" height="17.200" viewBox="0 0 20 16"><g fill="none" stroke="#f7c948" stroke-width="1.7"><path d="M5.3 1C3.3 1 3 1.8 3 3.300v2.200c0 1.5-.6 2.3-2 2.5 1.4.2 2 1 2 2.500v2.200c0 1.5.3 2.3 2.3 2.3"/><path d="M14.7 1c2 0 2.3.8 2.3 2.300v2.200c0 1.5.6 2.3 2 2.5-1.4.2-2 1-2 2.500v2.200c0 1.5-.3 2.3-2.3 2.3"/></g><g fill="#f7c948"><rect x="6.3" y="10" width="1.5" height="1.7"/><rect x="9.250" y="10" width="1.5" height="1.7"/><rect x="12.2" y="10" width="1.5" height="1.7"/></g></svg>
<span class="t" style="left:42.500px;top:10px;font-size:16.670px;line-height:20px;font-style:italic;color:#ffffff;letter-spacing:-.27px">project.config.json</span>
<svg class="abs" style="left:182px;top:13.700px" width="12" height="12" viewBox="0 0 12 12"><path d="M.8.800l10.4 10.400M11.2.8L.8 11.2" stroke="#f0f0f0" stroke-width="1.5"/></svg>
<svg class="abs" style="left:905px;top:9.500px" width="19" height="19" viewBox="0 0 19 19"><g fill="none" stroke="#d8d8d8" stroke-width="1.4"><path d="M7.5 5.500h6.300l3.7 3.700v8.500H7.500V9"/><path d="M13.5 5.800v3.700h3.7"/><path d="M5.5 8.500V4.800a2.3 2.3 0 0 0-2.3-2.300H1.500M3.8.5L1.3 2.500l2.5 2"/></g></svg>
<svg class="abs" style="left:947.500px;top:11px" width="17" height="16" viewBox="0 0 17 16"><g fill="none" stroke="#d8d8d8" stroke-width="1.5"><rect x=".8" y=".8" width="15" height="14" rx=".8"/><path d="M8.3.8v14"/></g></svg>
<svg class="abs" style="left:988.500px;top:17.500px" width="17" height="4" viewBox="0 0 17 4"><circle cx="2" cy="2" r="1.3" fill="#d8d8d8"/><circle cx="8.5" cy="2" r="1.3" fill="#d8d8d8"/><circle cx="15" cy="2" r="1.3" fill="#d8d8d8"/></svg>
</div>
<div id="editor">
<svg class="abs" style="left:11.500px;top:6.300px" width="20" height="14" viewBox="0 0 20 14"><g stroke="#b8b8b8" stroke-width="1.4"><path d="M0 1h1.600M4.5 1H19M0 5h1.600M4.5 5H19M0 9h1.600M4.5 9H19M0 13h1.600M4.5 13H19"/></g></svg>
<svg class="abs" style="left:53.300px;top:4.300px" width="14" height="17" viewBox="0 0 14 17"><path d="M1 .8h12v15L7 10.8 1 15.800z" fill="none" stroke="#c4c4c4" stroke-width="1.5"/></svg>
<svg class="abs" style="left:90px;top:7.500px" width="17" height="14" viewBox="0 0 17 14"><path d="M16.5 7H1.500M7.3 1L1.3 7l6 6" fill="none" stroke="#b8b8b8" stroke-width="1.4"/></svg>
<svg class="abs" style="left:125.500px;top:7.500px" width="17" height="14" viewBox="0 0 17 14"><path d="M.5 7h15M9.7 1l6 6-6 6" fill="none" stroke="#5a5a5a" stroke-width="1.4"/></svg>
<svg class="abs" style="left:163.300px;top:5px" width="21.5" height="17.2" viewBox="0 0 20 16"><g fill="none" stroke="#f7c948" stroke-width="1.7"><path d="M5.3 1C3.3 1 3 1.8 3 3.300v2.200c0 1.5-.6 2.3-2 2.5 1.4.2 2 1 2 2.500v2.200c0 1.5.3 2.3 2.3 2.3"/><path d="M14.7 1c2 0 2.3.8 2.3 2.300v2.200c0 1.5.6 2.3 2 2.5-1.4.2-2 1-2 2.500v2.200c0 1.5-.3 2.3-2.3 2.3"/></g><g fill="#f7c948"><rect x="6.3" y="10" width="1.5" height="1.7"/><rect x="9.250" y="10" width="1.5" height="1.7"/><rect x="12.2" y="10" width="1.5" height="1.7"/></g></svg>
<span class="t bc" style="left:192px;top:5px">project.config.json</span>
<svg class="abs" style="left:333.500px;top:9px" width="8" height="12" viewBox="0 0 8 12"><path d="M1 .8l5.5 5.200L1 11.2" fill="none" stroke="#a9a9a9" stroke-width="1.3"/></svg>
<span class="t bc" style="left:348.500px;top:4.500px;letter-spacing:4.500px">{}</span>
<span class="t bc" style="left:375px;top:5px">setting</span>
<div class="abs" style="left:69px;top:275.0px;width:960px;height:40.300px;background:#494949"></div>
<div class="ig" style="left:68.8px;top:69.8px;height:818.2px"></div>
<div class="ig" style="left:91.4px;top:69.8px;height:818.2px"></div>
<div class="ig" style="left:113.9px;top:151.9px;height:82.1px"></div>
<div class="ig" style="left:113.9px;top:316.1px;height:451.4px"></div>
<div class="ig" style="left:136.5px;top:151.9px;height:82.1px"></div>
<div class="ig" style="left:136.5px;top:316.1px;height:451.4px"></div>
<div class="ig" style="left:159.0px;top:603.4px;height:123.1px"></div>
<div class="ig" style="left:181.6px;top:603.4px;height:123.1px"></div>
<div class="abs bm" style="left:238.7px;top:275.0px;width:11.300px;height:41.0px"></div>
<div class="abs bm" style="left:114.3px;top:767.5px;width:11.300px;height:41.0px"></div>
<span class="ln" style="top:28.8px">1</span>
<div class="cl" style="top:28.8px;left:68.9px">{</div>
<span class="ln" style="top:69.8px">2</span>
<div class="cl" style="top:69.8px;left:114.0px"><span class="k1">"description"</span>: "<span class="s cj">项目配置文件。</span>",</div>
<span class="ln" style="top:110.9px">3</span>
<div class="cl" style="top:110.9px;left:114.0px"><span class="k1">"packOptions"</span>: {</div>
<span class="ln" style="top:151.9px">4</span>
<div class="cl" style="top:151.9px;left:159.1px">"<span class="k2">ignore</span>": [],</div>
<span class="ln" style="top:193.0px">5</span>
<div class="cl" style="top:193.0px;left:159.1px">"<span class="k2">include</span>": []</div>
<span class="ln" style="top:234.0px">6</span>
<div class="cl" style="top:234.0px;left:114.0px">},</div>
<span class="ln cur" style="top:275.0px">7</span>
<div class="cl" style="top:275.0px;left:114.0px"><span class="k1">"setting"</span>: {</div>
<span class="ln" style="top:316.1px">8</span>
<div class="cl" style="top:316.1px;left:159.1px">"<span class="k2">urlCheck</span>": <span class="s">false</span>,</div>
<span class="ln" style="top:357.1px">9</span>
<div class="cl" style="top:357.1px;left:159.1px">"<span class="k2">es6</span>": <span class="s">true</span>,</div>
<span class="ln" style="top:398.2px">10</span>
<div class="cl" style="top:398.2px;left:159.1px">"<span class="k2">postcss</span>": <span class="s">true</span>,</div>
<span class="ln" style="top:439.2px">11</span>
<div class="cl" style="top:439.2px;left:159.1px">"<span class="k2">minified</span>": <span class="s">true</span>,</div>
<span class="ln" style="top:480.2px">12</span>
<div class="cl" style="top:480.2px;left:159.1px">"<span class="k2">newFeature</span>": <span class="s">true</span>,</div>
<span class="ln" style="top:521.3px">13</span>
<div class="cl" style="top:521.3px;left:159.1px">"<span class="k2">bigPackageSizeSupport</span>": <span class="s">true</span>,</div>
<span class="ln" style="top:562.3px">14</span>
<div class="cl" style="top:562.3px;left:159.1px">"<span class="k2">babelSetting</span>": {</div>
<span class="ln" style="top:603.4px">15</span>
<div class="cl" style="top:603.4px;left:204.3px">"<span class="k3">ignore</span>": [],</div>
<span class="ln" style="top:644.4px">16</span>
<div class="cl" style="top:644.4px;left:204.3px">"<span class="k3">disablePlugins</span>": [],</div>
<span class="ln" style="top:685.4px">17</span>
<div class="cl" style="top:685.4px;left:204.3px">"<span class="k3">outputPath</span>": "<span class="s"></span>"</div>
<span class="ln" style="top:726.5px">18</span>
<div class="cl" style="top:726.5px;left:159.1px">}</div>
<span class="ln" style="top:767.5px">19</span>
<div class="cl" style="top:767.5px;left:114.0px">},</div>
<span class="ln" style="top:808.6px">20</span>
<div class="cl" style="top:808.6px;left:114.0px"><span class="k1">"compileType"</span>: "<span class="s">miniprogram</span>",</div>
<span class="ln" style="top:849.6px">21</span>
<div class="cl" style="top:849.6px;left:114.0px"><span class="k1">"libVersion"</span>: "<span class="s">3.8.10</span>",</div>
<svg class="abs" style="left:44.6px;top:34.6px" width="14" height="8" viewBox="0 0 14 8"><path d="M.8 1l6.2 5.800L13.2 1" fill="none" stroke="#c5c5c5" stroke-width="1.4"/></svg>
<svg class="abs" style="left:44.6px;top:116.7px" width="14" height="8" viewBox="0 0 14 8"><path d="M.8 1l6.2 5.800L13.2 1" fill="none" stroke="#c5c5c5" stroke-width="1.4"/></svg>
<svg class="abs" style="left:44.6px;top:280.8px" width="14" height="8" viewBox="0 0 14 8"><path d="M.8 1l6.2 5.800L13.2 1" fill="none" stroke="#c5c5c5" stroke-width="1.4"/></svg>
<svg class="abs" style="left:44.6px;top:568.1px" width="14" height="8" viewBox="0 0 14 8"><path d="M.8 1l6.2 5.800L13.2 1" fill="none" stroke="#c5c5c5" stroke-width="1.4"/></svg>
<svg class="abs" style="left:69px;top:65.5px" width="12" height="5" viewBox="0 0 12 5"><path d="M0 3.500q1.5-3 3-1.500t3 0 3 0 3 0" fill="none" stroke="#d9a800" stroke-width="1.1"/></svg>
<div class="abs" style="left:1011.5px;top:28px;width:1px;height:860px;background:#3b3b3b"></div>
<div class="abs" style="left:1023.7px;top:27.6px;width:6px;height:17.400px;background:#e0b000"></div>
<div class="abs" style="left:1012px;top:132.2px;width:17px;height:3px;background:#a3a3a3"></div>
<div class="abs" style="left:1017.8px;top:132.2px;width:6.600px;height:17.600px;background:#a3a3a3"></div>
<div class="abs" style="left:1017.8px;top:344.0px;width:6.600px;height:17.200px;background:#a3a3a3"></div>
</div>
<div id="status">
<svg class="abs" style="left:19.500px;top:9.4px" width="17" height="17" viewBox="0 0 17 17"><g fill="none" stroke="#b9b9b9" stroke-width="1.2"><circle cx="8.5" cy="8.5" r="7.5"/><path d="M5.5 5.500l6 6M11.5 5.500l-6 6"/></g></svg>
<span class="t" style="left:41.500px;top:9.9px;font-size:15.400px;color:#b9b9b9">0</span>
<svg class="abs" style="left:55px;top:9.4px" width="17" height="16" viewBox="0 0 17 16"><g fill="none" stroke="#b9b9b9" stroke-width="1.2" stroke-linejoin="round"><path d="M8.5 1L16 15H1z"/><path d="M8.5 6v5M8.5 12v1.5"/></g></svg>
<span class="t" style="left:76.500px;top:9.9px;font-size:15.400px;color:#b9b9b9">1</span>
<span class="t sb" style="left:916.500px">行 7，列 17</span>
<span class="t sb" style="left:1016.500px">空格: 2</span>
<span class="t sb" style="left:1084px;letter-spacing:-.6px">UTF-8</span>
<span class="t sb" style="left:1145px;letter-spacing:-.9px">CRLF</span>
<span class="t sb" style="left:1199px;letter-spacing:-.8px">JSON</span>
<svg class="abs" style="left:1257px;top:8.9px" width="17" height="16" viewBox="0 0 17 16"><g fill="none" stroke="#b9b9b9" stroke-width="1.2" stroke-linejoin="round"><path d="M8.5 1L16 15H1z"/><path d="M8.5 6v5M8.5 12v1.5"/></g></svg>
</div>
<div id="vsplit"></div>
<div id="bottomline"></div>
</body>
</html>
